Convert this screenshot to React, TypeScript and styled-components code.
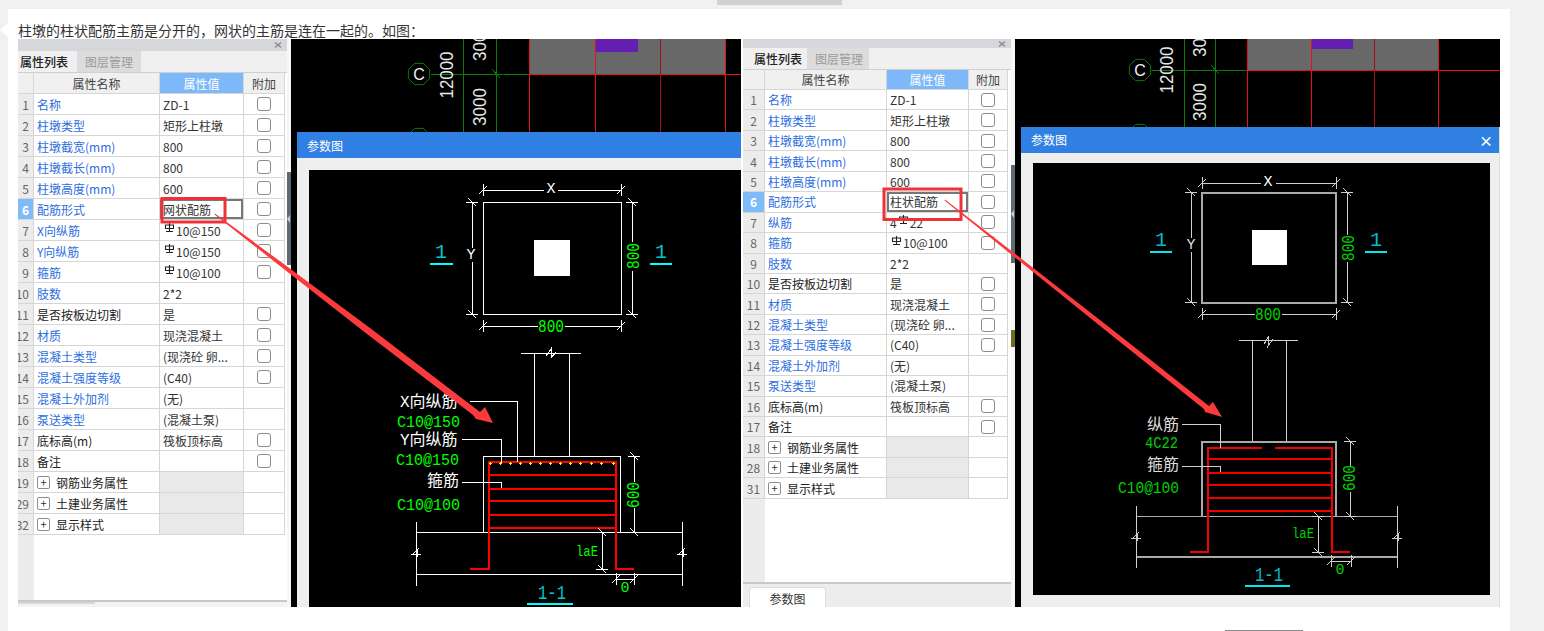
import React, { ReactNode } from "react";
import styled, { createGlobalStyle } from "styled-components";

const GlobalStyle = createGlobalStyle`
  html, body { margin: 0; padding: 0; height: 631px; overflow: hidden; background: #f1f1f1; }
  body { font-family: "Noto Sans CJK SC", "Noto Sans", sans-serif; }
  * { box-sizing: border-box; }
`;

const Page = styled.div`
  position: relative;
  width: 1544px;
  height: 631px;
  padding: 9px 34px 0 8px;
  overflow: hidden;
`;
const TopThumb = styled.div`
  position: absolute;
  left: 717px;
  top: 0;
  width: 125px;
  height: 5px;
  background: #d1d1d1;
`;
const BottomEdge = styled.div`
  position: absolute;
  left: 1225px;
  top: 630px;
  width: 78px;
  height: 1px;
  background: #8a8a8a;
`;
const Notch = styled.div`
  position: absolute;
  left: 0;
  top: 23px;
  width: 0;
  height: 0;
  border-top: 7px solid transparent;
  border-bottom: 7px solid transparent;
  border-right: 8px solid #fff;
`;
const Card = styled.div`
  height: 622px;
  background: #fff;
  padding-left: 10px;
`;
const Caption = styled.p`
  margin: 0;
  height: 30px;
  padding-top: 12px;
  font-size: 14px;
  line-height: 18px;
  color: #333;
  white-space: nowrap;
  text-spacing-trim: space-all;
  font-feature-settings: "chws" 0, "palt" 0, "halt" 0;
`;
const Figures = styled.div`
  display: flex;
  height: 568px;
`;
const Figure = styled.div<{ $w: number }>`
  position: relative;
  display: flex;
  flex: none;
  width: ${(p) => p.$w}px;
  height: 568px;
  overflow: hidden;
`;
const Annotations = styled.svg`
  position: absolute;
  left: 0;
  top: 0;
  z-index: 5;
  pointer-events: none;
`;

/* property panel */
const Panel = styled.div<{ $w: number }>`
  display: flex;
  flex-direction: column;
  flex: none;
  width: ${(p) => p.$w}px;
  height: 568px;
  font-size: 12px;
  color: #333;
  overflow: hidden;
`;
const TitleBar = styled.div<{ $h: number }>`
  display: flex;
  align-items: center;
  justify-content: flex-end;
  flex: none;
  height: ${(p) => p.$h}px;
  padding-right: 5px;
  background: #d5d7db;
`;
const TabBar = styled.div`
  display: flex;
  flex: none;
  height: 22px;
  background: #f0f0f0;
  border-bottom: 1px solid #cfcfcf;
`;
const Tab = styled.div<{ $w: number; $pad: number; $on?: boolean; $gap?: number }>`
  width: ${(p) => p.$w}px;
  margin-left: ${(p) => p.$gap ?? 0}px;
  padding-left: ${(p) => p.$pad}px;
  font-size: 12px;
  line-height: 21px;
  color: ${(p) => (p.$on ? "#222" : "#9b9b9b")};
  background: ${(p) => (p.$on ? "#f0f0f0" : "#dcdcdc")};
  font-weight: ${(p) => (p.$on ? 500 : 400)};
  white-space: nowrap;
`;
const Row = styled.div<{ $cols: string; $h: number }>`
  display: grid;
  grid-template-columns: ${(p) => p.$cols};
  flex: none;
  height: ${(p) => p.$h}px;
`;
const Cell = styled.div`
  display: flex;
  align-items: center;
  min-width: 0;
  padding-left: 3px;
  border-right: 1px solid #d6d6d6;
  border-bottom: 1px solid #d6d6d6;
  white-space: nowrap;
  overflow: hidden;
  background: #fff;
`;
const IndexCell = styled(Cell)<{ $right?: boolean; $on?: boolean }>`
  justify-content: ${(p) => (p.$right ? "flex-end" : "center")};
  padding: ${(p) => (p.$right ? "0 4px 0 0" : "0")};
  background: ${(p) => (p.$on ? "#7fbaf9" : "#ececec")};
  color: ${(p) => (p.$on ? "#fff" : "#666")};
  font-weight: ${(p) => (p.$on ? 700 : 400)};
`;
const NameCell = styled(Cell)<{ $link?: boolean }>`
  color: ${(p) => (p.$link ? "#2d6ee0" : "#222")};
`;
const ValueCell = styled(Cell)<{ $on?: boolean; $group?: boolean }>`
  color: #333;
  background: ${(p) => (p.$group ? "#e9e9e9" : "#fff")};
  box-shadow: ${(p) => (p.$on ? "inset 0 0 0 2px #777" : "none")};
`;
const ExtraCell = styled(Cell)`
  justify-content: center;
  padding: 0;
`;
const HeadCell = styled(Cell)<{ $accent?: boolean }>`
  justify-content: center;
  padding: 0;
  background: ${(p) => (p.$accent ? "#7db8f8" : "#f0f0f0")};
  color: ${(p) => (p.$accent ? "#fff" : "#444")};
`;
const Box = styled.span`
  display: block;
  width: 14px;
  height: 14px;
  border: 1px solid #8c8c8c;
  border-radius: 3px;
  background: #fff;
`;
const Expander = styled.span`
  display: flex;
  align-items: center;
  justify-content: center;
  flex: none;
  width: 13px;
  height: 13px;
  margin-right: 6px;
  border: 1px solid #8c8c8c;
  border-radius: 2px;
  font-size: 11px;
  line-height: 11px;
  color: #333;
`;
const RebarMark = styled.svg`
  flex: none;
  margin: -4px 1px 0 1px;
`;
const PanelFill = styled.div<{ $idx: number }>`
  flex: 1;
  background: linear-gradient(90deg, #ececec ${(p) => p.$idx}px, #fff ${(p) => p.$idx}px);
  border-bottom: 2px solid #c8c8c8;
`;
const ScrollFoot = styled.div`
  flex: none;
  height: 5px;
  background: #f3f3f3;
`;
const ScrollThumb = styled.div`
  width: 77px;
  height: 2px;
  background: #d8d8d8;
`;
const TabFoot = styled.div`
  flex: none;
  height: 23px;
  padding: 3px 0 0 6px;
  background: #ededed;
`;
const FootTab = styled.div`
  width: 77px;
  height: 20px;
  border: 1px solid #ddd;
  border-bottom: 0;
  border-radius: 3px 3px 0 0;
  background: #fff;
  text-align: center;
  font-size: 12px;
  line-height: 21px;
  color: #333;
`;

/* splitter */
const Splitter = styled.div<{ $top: number; $h: number }>`
  flex: none;
  width: 4px;
  padding-top: ${(p) => p.$top}px;
  background: #f7f7f7;
  --grip: ${(p) => p.$h}px;
`;
const Grip = styled.div`
  display: flex;
  align-items: center;
  height: var(--grip);
  background: #5e6975;
`;
const GripArrow = styled.span`
  width: 0;
  height: 0;
  border-top: 4px solid transparent;
  border-bottom: 4px solid transparent;
  border-right: 3px solid #c6ccd2;
`;
const Olive = styled.div<{ $top: number }>`
  width: 4px;
  height: 17px;
  margin-top: ${(p) => p.$top}px;
  background: #6f6c1e;
`;

/* CAD window */
const Canvas = styled.div<{ $mr: number }>`
  position: relative;
  flex: 1;
  margin-right: ${(p) => p.$mr}px;
  background: #000;
  overflow: hidden;
`;
const Plot = styled.svg`
  display: block;
  shape-rendering: crispEdges;
  text { shape-rendering: auto; }
`;
const Dialog = styled.div<{ $top: number; $green?: boolean }>`
  position: absolute;
  left: 6px;
  top: ${(p) => p.$top}px;
  right: 0;
  bottom: 0;
  display: flex;
  flex-direction: column;
  background: #eee;
  border-right: ${(p) => (p.$green ? "1px solid #cfe5cf" : "0")};
`;
const DialogTitle = styled.div`
  display: flex;
  align-items: center;
  justify-content: space-between;
  flex: none;
  height: 26px;
  padding: 0 6px 0 10px;
  background: #2f80e2;
  color: #fff;
  font-size: 12px;
`;
const CloseMark = styled.span`
  font-size: 14px;
  font-weight: 700;
  line-height: 1;
`;
const DialogBody = styled.div<{ $pad: string }>`
  flex: 1;
  min-height: 0;
  padding: ${(p) => p.$pad};
`;
const Drawing = styled.div`
  width: 100%;
  height: 100%;
  background: #000;
  overflow: hidden;
`;

/* ---------- data ---------- */
type RowData = {
  n: number;
  label: string;
  value?: ReactNode;
  link?: boolean;
  check?: boolean;
  on?: boolean;
  group?: boolean;
};

const Rebar = () => (
  <RebarMark width="11" height="10" viewBox="0 0 11 10" fill="none" stroke="#222" strokeWidth="1.1">
    <path d="M1.5 2h8v3.5h-8zM5.5 0v8.5M2 8.5h7" />
  </RebarMark>
);

const PaneClose = () => (
  <svg width="8" height="8" viewBox="0 0 8 8" fill="none" stroke="#8a8a8a" strokeWidth="1.5">
    <path d="M1 1.5l6 5M7 1.5l-6 5" />
  </svg>
);

const leftRows: RowData[] = [
  { n: 1, label: "名称", value: "ZD-1", link: true, check: true },
  { n: 2, label: "柱墩类型", value: "矩形上柱墩", link: true, check: true },
  { n: 3, label: "柱墩截宽(mm)", value: "800", link: true, check: true },
  { n: 4, label: "柱墩截长(mm)", value: "800", link: true, check: true },
  { n: 5, label: "柱墩高度(mm)", value: "600", link: true, check: true },
  { n: 6, label: "配筋形式", value: "网状配筋", link: true, check: true, on: true },
  { n: 7, label: "X向纵筋", value: <><Rebar />10@150</>, link: true, check: true },
  { n: 8, label: "Y向纵筋", value: <><Rebar />10@150</>, link: true, check: true },
  { n: 9, label: "箍筋", value: <><Rebar />10@100</>, link: true, check: true },
  { n: 10, label: "肢数", value: "2*2", link: true },
  { n: 11, label: "是否按板边切割", value: "是", check: true },
  { n: 12, label: "材质", value: "现浇混凝土", link: true, check: true },
  { n: 13, label: "混凝土类型", value: "(现浇砼 卵...", link: true, check: true },
  { n: 14, label: "混凝土强度等级", value: "(C40)", link: true, check: true },
  { n: 15, label: "混凝土外加剂", value: "(无)", link: true },
  { n: 16, label: "泵送类型", value: "(混凝土泵)", link: true },
  { n: 17, label: "底标高(m)", value: "筏板顶标高", check: true },
  { n: 18, label: "备注", check: true },
  { n: 19, label: "钢筋业务属性", group: true },
  { n: 29, label: "土建业务属性", group: true },
  { n: 32, label: "显示样式", group: true },
];

const rightRows: RowData[] = [
  { n: 1, label: "名称", value: "ZD-1", link: true, check: true },
  { n: 2, label: "柱墩类型", value: "矩形上柱墩", link: true, check: true },
  { n: 3, label: "柱墩截宽(mm)", value: "800", link: true, check: true },
  { n: 4, label: "柱墩截长(mm)", value: "800", link: true, check: true },
  { n: 5, label: "柱墩高度(mm)", value: "600", link: true, check: true },
  { n: 6, label: "配筋形式", value: "柱状配筋", link: true, check: true, on: true },
  { n: 7, label: "纵筋", value: <>4<Rebar />22</>, link: true, check: true },
  { n: 8, label: "箍筋", value: <><Rebar />10@100</>, link: true, check: true },
  { n: 9, label: "肢数", value: "2*2", link: true },
  { n: 10, label: "是否按板边切割", value: "是", check: true },
  { n: 11, label: "材质", value: "现浇混凝土", link: true, check: true },
  { n: 12, label: "混凝土类型", value: "(现浇砼 卵...", link: true, check: true },
  { n: 13, label: "混凝土强度等级", value: "(C40)", link: true, check: true },
  { n: 14, label: "混凝土外加剂", value: "(无)", link: true },
  { n: 15, label: "泵送类型", value: "(混凝土泵)", link: true },
  { n: 16, label: "底标高(m)", value: "筏板顶标高", check: true },
  { n: 17, label: "备注", check: true },
  { n: 18, label: "钢筋业务属性", group: true },
  { n: 28, label: "土建业务属性", group: true },
  { n: 31, label: "显示样式", group: true },
];

const PropertyTable = ({ rows, cols, h, headH, idxRight }: { rows: RowData[]; cols: string; h: number; headH: number; idxRight?: boolean }) => (
  <>
    <Row $cols={cols} $h={headH}>
      <HeadCell />
      <HeadCell>属性名称</HeadCell>
      <HeadCell $accent>属性值</HeadCell>
      <HeadCell>附加</HeadCell>
    </Row>
    {rows.map((r) => (
      <Row key={r.n} $cols={cols} $h={h}>
        <IndexCell $right={idxRight} $on={r.on}>{r.n}</IndexCell>
        <NameCell $link={r.link}>
          {r.group && <Expander>+</Expander>}
          {r.label}
        </NameCell>
        <ValueCell $on={r.on} $group={r.group}>{r.value}</ValueCell>
        <ExtraCell>{r.check && <Box />}</ExtraCell>
      </Row>
    ))}
  </>
);

/* ---------- CAD drawing helpers (all coordinates are screen pixels via viewBox) ---------- */
const mono = '"Liberation Mono", "Noto Sans CJK SC", monospace';
const sans = '"Liberation Sans", sans-serif';

type Tone = { line: string; green: string; cyan: string; mark: string };
const brightTone: Tone = { line: "#ffffff", green: "#00ff00", cyan: "#00c8d0", mark: "#00ffff" };
const softTone: Tone = { line: "#d0d0d0", green: "#00d000", cyan: "#00bcd0", mark: "#00e8f0" };

const Txt = ({ x, y, c, size, children, anchor = "middle", rot, font = mono, len }: { x: number; y: number; c: string; size: number; children: string; anchor?: "start" | "middle" | "end"; rot?: boolean; font?: string; len?: number }) => (
  <text
    x={x}
    y={y}
    fill={c}
    fontSize={size}
    fontFamily={font}
    textAnchor={anchor}
    dominantBaseline="central"
    textLength={len}
    lengthAdjust={len ? "spacingAndGlyphs" : undefined}
    transform={rot ? `rotate(-90 ${x} ${y})` : undefined}
  >
    {children}
  </text>
);

const Stroke = ({ d, c, w = 1 }: { d: string; c: string; w?: number }) => <path d={d} stroke={c} strokeWidth={w} fill="none" />;

const hDim = (x1: number, x2: number, y: number) =>
  `M${x1} ${y}H${x2}M${x1} ${y - 6}V${y + 6}M${x2} ${y - 6}V${y + 6}M${x1 - 4} ${y + 4}L${x1 + 4} ${y - 4}M${x2 - 4} ${y + 4}L${x2 + 4} ${y - 4}`;
const vDim = (x: number, y1: number, y2: number) =>
  `M${x} ${y1}V${y2}M${x - 6} ${y1}H${x + 6}M${x - 6} ${y2}H${x + 6}M${x - 4} ${y1 - 4}L${x + 4} ${y1 + 4}M${x - 4} ${y2 - 4}L${x + 4} ${y2 + 4}`;
const vBreak = (x: number, y: number) => `M${x - 5} ${y + 1}H${x + 5}M${x - 3} ${y + 1}L${x + 2} ${y - 4}L${x + 1} ${y + 4}`;

const SectionMark = ({ x, w, y, t }: { x: number; w: number; y: number; t: Tone }) => (
  <>
    <Txt x={x} y={y - 12} c={t.cyan} size={20}>1</Txt>
    <path d={`M${x - w / 2} ${y}H${x + w / 2}`} stroke={t.mark} strokeWidth={2} />
  </>
);

const Bubble = ({ x, y, label }: { x: number; y: number; label: string }) => {
  const r = 11.5;
  const pts = Array.from({ length: 8 }, (_, i) => {
    const a = (Math.PI / 4) * i + Math.PI / 8;
    return `${x + r * Math.cos(a)},${y + r * Math.sin(a)}`;
  }).join(" ");
  return (
    <>
      <polygon points={pts} fill="none" stroke="#0a7a0a" strokeWidth={1} style={{ shapeRendering: "auto" }} />
      <Txt x={x} y={y} c="#f2f2f2" size={16} font={sans}>{label}</Txt>
    </>
  );
};

const GridBackdrop = ({ vb, w, h, bx, by, lx1, lx2, lx3, reds, gray, purple, dimX, dimY, stepX, hy, redEnd, base, upper }: { vb: string; w: number; h: number; bx: number; by: number; lx1: number; lx2: number; lx3: number; reds: number[]; gray: number[]; purple: number[]; dimX: number; dimY: number; stepX: number; hy: number; redEnd: number; base: number; upper: number }) => (
  <Plot width={w} height={h} viewBox={vb}>
    <rect x={gray[0]} y={39} width={gray[1] - gray[0]} height={hy - 39} fill="#686868" />
    <rect x={purple[0]} y={39} width={purple[1] - purple[0]} height={purple[2] - 39} fill="#641fb2" />
    <Stroke d={`M${lx1} 39V${base}M${lx2} 39V${base}M${bx + 12} ${hy}H${lx3}`} c="#0a7a0a" />
    <Stroke d={`M${lx2 - 4} ${hy - 5}L${lx2 + 4} ${hy + 4}`} c="#0a7a0a" />
    <Stroke d={`M${lx3} ${hy}H${redEnd}`} c="#e8101c" />
    {reds.map((x, i) => (
      <Stroke key={x} d={`M${x} 39V${base}`} c={i === 2 ? "#a50e14" : "#e8101c"} />
    ))}
    <Bubble x={bx} y={by} label="C" />
    <Bubble x={bx} y={by + 65} label="B" />
    <Txt x={dimX} y={dimY} c="#e8e8e8" size={18} rot font={sans} len={47}>12000</Txt>
    <Txt x={stepX} y={upper} c="#e8e8e8" size={18} rot font={sans} len={38}>3000</Txt>
    <Txt x={stepX} y={dimY + 32} c="#e8e8e8" size={18} rot font={sans} len={38}>3000</Txt>
  </Plot>
);

const LeftDrawing = () => {
  const t = brightTone;
  const red = "#ff0000";
  const dots = [490, 500, 510, 520, 530, 540, 550, 560, 570, 580, 591, 601, 613];
  return (
    <Plot width={432} height={437} viewBox="309 170 432 437">
      <Stroke c={t.line} d={`${hDim(483, 621, 190).replace(`M483 190H621`, "M483 190H544M558 190H621")}`} />
      <Txt x={551} y={189} c="#fff" size={15}>X</Txt>
      <Stroke c={t.line} d="M483 202.5H621V314.5H483Z" />
      <rect x={534} y={240} width={36} height={36} fill="#fff" />
      <Stroke c={t.line} d={vDim(472, 202, 314).replace("M472 202V314", "M472 202V248M472 262V314")} />
      <Txt x={471} y={255} c="#fff" size={15}>Y</Txt>
      <Stroke c={t.line} d={vDim(632, 202, 314).replace("M632 202V314", "M632 202V242M632 271V314")} />
      <Txt x={634} y={256} c={t.green} size={18} rot len={26}>800</Txt>
      <SectionMark x={441} w={23} y={264} t={t} />
      <SectionMark x={661} w={22} y={264} t={t} />
      <Stroke c={t.line} d={hDim(483, 621, 326).replace("M483 326H621", "M483 326H538M565 326H621")} />
      <Txt x={551} y={327} c={t.green} size={18} len={26}>800</Txt>

      <Stroke c={t.line} d="M521 353.5H581M534.5 353.5V456M569.5 353.5V456M483.5 532V456.5H620.5V532" />
      <Stroke c={t.line} d="M546 356L551 349L551 358L556 352" />
      <Stroke c={t.line} d="M416 532.5H682M416 574.5H682M416.5 522V586M682.5 522V586" />
      <Stroke c={t.line} d={vBreak(416, 553) + vBreak(682, 553)} />
      <Stroke c={red} w={2} d="M470 569H488.5V461.5H615.5V569H634M488 474.5H616M488 488.5H616M488 500.5H616M488 514.5H616M488 527.5H616" />
      {dots.map((x) => (
        <Stroke key={x} c="#ffff00" d={`M${x - 1.5} 463.5H${x + 1.5}M${x} 462V465`} />
      ))}
      <Stroke c={t.line} d={vDim(634, 456, 532).replace("M634 456V532", "M634 456V482M634 508V532")} />
      <Txt x={634} y={495} c={t.green} size={18} rot len={26}>600</Txt>
      <Stroke c={t.line} d={vDim(602, 532, 569)} />
      <Txt x={587} y={552} c={t.green} size={14} len={22}>laE</Txt>
      <Stroke c={t.line} d={hDim(616, 634, 579)} />
      <Txt x={625} y={588} c={t.green} size={15}>0</Txt>
      <Txt x={552} y={593} c={t.cyan} size={20} len={28}>1-1</Txt>
      <path d="M527 604H573" stroke={t.mark} strokeWidth={2} />

      <Txt x={400} y={403} c="#fff" size={16} anchor="start">X向纵筋</Txt>
      <Stroke c={t.line} d="M470 401.5H517V462" />
      <Txt x={397} y={422} c={t.green} size={17} anchor="start" len={63}>C10@150</Txt>
      <Txt x={400} y={441} c="#fff" size={16} anchor="start">Y向纵筋</Txt>
      <Stroke c={t.line} d="M462 439.5H501.5V463" />
      <Txt x={396} y={460} c={t.green} size={17} anchor="start" len={63}>C10@150</Txt>
      <Txt x={427} y={482} c="#fff" size={16} anchor="start">箍筋</Txt>
      <Stroke c={t.line} d="M462 482.5H501.5V488" />
      <Txt x={397} y={505} c={t.green} size={17} anchor="start" len={63}>C10@100</Txt>
    </Plot>
  );
};

const RightDrawing = () => {
  const t = softTone;
  const red = "#f00000";
  return (
    <Plot width={457} height={432} viewBox="1033 163 457 432">
      <Stroke c={t.line} d={hDim(1202, 1336, 183).replace("M1202 183H1336", "M1202 183H1261M1276 183H1336")} />
      <Txt x={1268} y={182} c="#fff" size={15}>X</Txt>
      <Stroke c="#aaaaaa" w={2} d="M1202 192.5H1336V302.5H1202Z" />
      <rect x={1252} y={230} width={35} height={35} fill="#fff" />
      <Stroke c={t.line} d={vDim(1191, 192, 302).replace("M1191 192V302", "M1191 192V238M1191 252V302")} />
      <Txt x={1191} y={245} c="#ddd" size={15}>Y</Txt>
      <Stroke c={t.line} d={vDim(1347, 192, 302).replace("M1347 192V302", "M1347 192V235M1347 262V302")} />
      <Txt x={1349} y={248} c={t.green} size={18} rot len={26}>800</Txt>
      <SectionMark x={1161} w={22} y={252} t={t} />
      <SectionMark x={1376} w={22} y={252} t={t} />
      <Stroke c={t.line} d={hDim(1202, 1336, 314).replace("M1202 314H1336", "M1202 314H1255M1282 314H1336")} />
      <Txt x={1268} y={315} c={t.green} size={18} len={26}>800</Txt>

      <Stroke c={t.line} d="M1239 340.5H1298M1252.5 340.5V441M1286.5 340.5V441" />
      <Stroke c="#aaaaaa" w={2} d="M1202 516V441.5H1336V516" />
      <Stroke c={t.line} d="M1264 344L1269 336L1268 346L1273 339" />
      <Stroke c="#aaaaaa" d="M1136 516.5H1397" />
      <Stroke c="#aaaaaa" w={2} d="M1136 557H1397" />
      <Stroke c={t.line} d="M1136.5 506V568M1397.5 506V568" />
      <Stroke c={t.line} d={vBreak(1136, 537) + vBreak(1397, 537)} />
      <Stroke c={red} w={2} d="M1190 552H1207.5V447.5H1262M1275 447.5H1331.5V552H1350M1207 458.5H1332M1207 472.5H1332M1207 484.5H1332M1207 497.5H1332M1207 511H1332" />
      <Stroke c={t.line} d={vDim(1350, 441, 516).replace("M1350 441V516", "M1350 441V466M1350 492V516")} />
      <Txt x={1350} y={478} c={t.green} size={18} rot len={26}>600</Txt>
      <Stroke c={t.line} d={vDim(1318, 516, 552)} />
      <Txt x={1303} y={534} c={t.green} size={14} len={22}>laE</Txt>
      <Stroke c={t.line} d={hDim(1331, 1351, 561)} />
      <Txt x={1340} y={570} c={t.green} size={15}>0</Txt>
      <Txt x={1269} y={575} c={t.cyan} size={20} len={28}>1-1</Txt>
      <path d="M1245 586H1290" stroke={t.mark} strokeWidth={2} />

      <Txt x={1147} y={426} c="#ddd" size={16} anchor="start">纵筋</Txt>
      <Stroke c={t.line} d="M1182 424.5H1220.5V448" />
      <Txt x={1145} y={444} c={t.green} size={16} anchor="start" len={33}>4C22</Txt>
      <Txt x={1147} y={466} c="#ddd" size={16} anchor="start">箍筋</Txt>
      <Stroke c={t.line} d="M1182 466.5H1220.5V472" />
      <Txt x={1118} y={488} c={t.green} size={17} anchor="start" len={61}>C10@100</Txt>
    </Plot>
  );
};

const ARROW = "#fa3a3c";

export default function App() {
  const leftCols = "16px 126px 84px 41px";
  const rightCols = "22px 122px 82px 39px";
  return (
    <Page>
      <GlobalStyle />
      <TopThumb />
      <Notch />
      <BottomEdge />
      <Card>
        <Caption>柱墩的柱状配筋主筋是分开的，网状的主筋是连在一起的。如图：</Caption>
        <Figures>
          <Figure $w={725}>
            <Panel $w={269}>
              <TitleBar $h={12}><PaneClose /></TitleBar>
              <TabBar>
                <Tab $w={59} $pad={2} $on>属性列表</Tab>
                <Tab $w={64} $pad={8}>图层管理</Tab>
              </TabBar>
              <PropertyTable rows={leftRows} cols={leftCols} h={21} headH={21} idxRight />
              <PanelFill $idx={16} />
              <ScrollFoot><ScrollThumb /></ScrollFoot>
            </Panel>
            <Splitter $top={133} $h={93}>
              <Grip><GripArrow /></Grip>
            </Splitter>
            <Canvas $mr={2}>
              <GridBackdrop
                vb="291 39 450 93" w={450} h={93}
                bx={419} by={74} lx1={463} lx2={496} lx3={529}
                reds={[529, 595, 660, 725]} gray={[529, 725]} purple={[595, 638, 52]}
                dimX={447} dimY={75} stepX={480} hy={74} redEnd={741} base={132} upper={42}
              />
              <Dialog $top={93}>
                <DialogTitle>参数图</DialogTitle>
                <DialogBody $pad="12px 0 0 12px">
                  <Drawing><LeftDrawing /></Drawing>
                </DialogBody>
              </Dialog>
            </Canvas>
            <Annotations width={725} height={568} viewBox="18 39 725 568">
              <rect x={162} y={198.5} width={63} height={23.5} fill="none" stroke="#ee3237" strokeWidth={3} />
              <polygon points="215,213.5 286.2,265.8 372,329.6 480,412 485,407 493,423 476,419 473,415 368,334.8 283.8,269 214.5,214.5" fill={ARROW} />
            </Annotations>
          </Figure>

          <Figure $w={757}>
            <Panel $w={268}>
              <TitleBar $h={9}><PaneClose /></TitleBar>
              <TabBar>
                <Tab $w={60} $pad={9} $gap={2} $on>属性列表</Tab>
                <Tab $w={62} $pad={8} $gap={2}>图层管理</Tab>
              </TabBar>
              <PropertyTable rows={rightRows} cols={rightCols} h={20.44} headH={20} />
              <PanelFill $idx={22} />
              <TabFoot><FootTab>参数图</FootTab></TabFoot>
            </Panel>
            <Splitter $top={126} $h={98}>
              <Grip><GripArrow /></Grip>
              <Olive $top={67} />
            </Splitter>
            <Canvas $mr={0}>
              <GridBackdrop
                vb="1015 39 485 88" w={485} h={88}
                bx={1140} by={70} lx1={1184} lx2={1215} lx3={1247}
                reds={[1247, 1311, 1374, 1438]} gray={[1247, 1438]} purple={[1311, 1353, 49]}
                dimX={1167} dimY={70} stepX={1200} hy={70} redEnd={1500} base={127} upper={38}
              />
              <Dialog $top={87.6} $green>
                <DialogTitle>
                  参数图
                  <CloseMark>×</CloseMark>
                </DialogTitle>
                <DialogBody $pad="10px 9px 12px 12px">
                  <Drawing><RightDrawing /></Drawing>
                </DialogBody>
              </Dialog>
            </Canvas>
            <Annotations width={757} height={568} viewBox="743 39 757 568">
              <rect x={884} y={189} width={77} height={30.5} fill="none" stroke="#ee3237" strokeWidth={3} />
              <polygon points="945,199.5 1010.9,250.4 1111.5,329 1209,406 1213,402 1222,417 1205,412 1204,409 1108.5,332.8 1009.1,252.8 944.5,200.5" fill={ARROW} />
            </Annotations>
          </Figure>
        </Figures>
      </Card>
    </Page>
  );
}
